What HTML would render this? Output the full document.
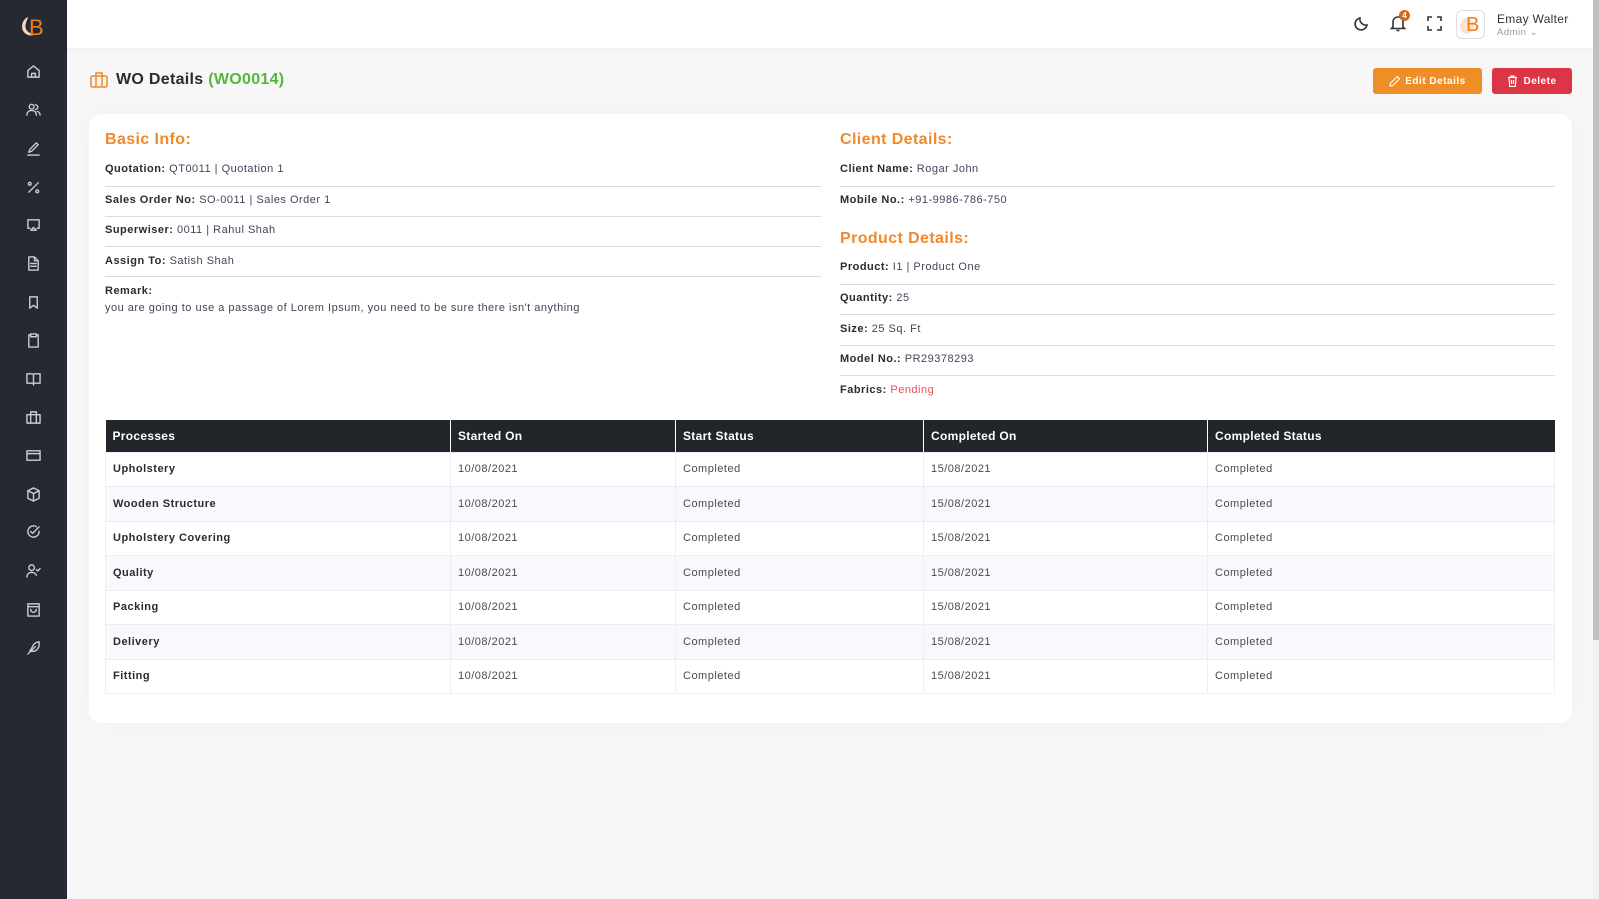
<!DOCTYPE html>
<html><head><meta charset="utf-8"><style>
*{box-sizing:border-box;margin:0;padding:0}
body{width:1599px;height:899px;overflow:hidden;background:#f7f7f7;font-family:"Liberation Sans",sans-serif;color:#222;position:relative}
.side{position:absolute;left:0;top:0;width:67px;height:899px;background:#262932}
.side svg.ic{position:absolute;left:26px;width:15px;height:15px;fill:none;stroke:#c9ccd3;stroke-width:1.5;stroke-linecap:round;stroke-linejoin:round}
.top{position:absolute;left:67px;top:0;width:1526px;height:48px;background:#fff;box-shadow:0 2px 8px rgba(0,0,0,.04)}
.scroll{position:absolute;right:0;top:0;width:6px;height:640px;background:#c1c1c1}
.scrolltrack{position:absolute;right:0;top:0;width:6px;height:899px;background:#f1f1f1}
.title{position:absolute;left:116px;top:71px;font-size:16px;font-weight:bold;color:#2b2b2b;letter-spacing:.3px}
.title span{color:#52b73c}
.btn{position:absolute;top:68px;height:26px;border-radius:3px;color:#fff;font-size:10px;font-weight:bold;display:flex;align-items:center;justify-content:center;gap:5px;letter-spacing:.5px}
.card{position:absolute;left:89px;top:114px;width:1483px;height:609px;background:#fff;border-radius:12px;box-shadow:0 0 20px rgba(0,0,0,.03)}
.h{position:absolute;font-size:16px;font-weight:bold;color:#f0892a;letter-spacing:.4px}
.row{position:absolute;font-size:11px;color:#4b3f5a;letter-spacing:.5px}
.row b{color:#2b2b2b}
.ln{position:absolute;height:1px;background:#dcdcdc}
table{position:absolute;left:105px;top:420px;width:1450px;border-collapse:collapse;font-size:11px}
th{background:#22252a;color:#fff;text-align:left;height:32px;padding:0 7px;font-size:12px;border-right:1px solid #fff;letter-spacing:.3px}
th:last-child{border-right:none}
td{height:34.5px;padding:0 7px;color:#4b4b4b;border:1px solid #ecedf5;letter-spacing:.5px}
td:first-child{font-weight:bold;color:#2b2b2b}
tr:nth-child(odd) td{background:#f8f9fc}
</style></head><body>
<div class="side">
<svg style="position:absolute;left:19px;top:12px" width="30" height="28" viewBox="0 0 30 28"><path d="M9 5 C2 8 1 18 7 22 C10 24 14 24 16 22 C9 22 5 17 7 11 C8 8 9 6 9 5Z" fill="#f5d6c0"/><text x="10" y="23" font-family="Liberation Sans" font-size="22" fill="#f07d17">B</text></svg>
<svg class="ic" style="top:64px" viewBox="0 0 16 16"><path d="M2 7L8 2l6 5v7H2z M6 14v-4h4v4"/></svg>
<svg class="ic" style="top:102px" viewBox="0 0 16 16"><circle cx="6" cy="5" r="2.5"/><path d="M1 14c0-3 2-5 5-5s5 2 5 5M10 3a2.5 2.5 0 010 5M12 10c2 .5 3 2 3 4"/></svg>
<svg class="ic" style="top:141px" viewBox="0 0 16 16"><path d="M3 12l1-3 7-7 2 2-7 7-3 1zM2 15h12"/></svg>
<svg class="ic" style="top:180px" viewBox="0 0 16 16"><path d="M3 13L13 3"/><circle cx="4" cy="4" r="1.5"/><circle cx="12" cy="12" r="1.5"/></svg>
<svg class="ic" style="top:217px" viewBox="0 0 16 16"><path d="M4 12H2V3h12v9h-2M5 14l3-3 3 3z"/></svg>
<svg class="ic" style="top:256px" viewBox="0 0 16 16"><path d="M3 1h6l4 4v10H3zM9 1v4h4M5 8h6M5 11h6"/></svg>
<svg class="ic" style="top:295px" viewBox="0 0 16 16"><path d="M4 2h8v12l-4-3-4 3z"/></svg>
<svg class="ic" style="top:333px" viewBox="0 0 16 16"><path d="M5 2H3v13h10V2h-2M5 1h6v3H5z"/></svg>
<svg class="ic" style="top:371px" viewBox="0 0 16 16"><path d="M1 3h6l1 1 1-1h6v10H1zM8 4v11"/></svg>
<svg class="ic" style="top:410px" viewBox="0 0 16 16"><path d="M1 5h14v9H1zM5 5V2h6v3M5 5v9M11 5v9"/></svg>
<svg class="ic" style="top:448px" viewBox="0 0 16 16"><path d="M1 3h14v10H1zM1 6h14"/></svg>
<svg class="ic" style="top:487px" viewBox="0 0 16 16"><path d="M8 1l6 3v8l-6 3-6-3V4zM2 4l6 3 6-3M8 7v8"/></svg>
<svg class="ic" style="top:524px" viewBox="0 0 16 16"><path d="M14 8a6 6 0 11-3-5.2M5 8l2 2 7-7"/></svg>
<svg class="ic" style="top:563px" viewBox="0 0 16 16"><circle cx="6" cy="5" r="3"/><path d="M1 15c0-3 2-5 5-5s4 1 5 3M11 7l1.5 1.5L15 6"/></svg>
<svg class="ic" style="top:602px" viewBox="0 0 16 16"><path d="M2 2h12v13H2zM2 5h12M5 8a3 3 0 006 0"/></svg>
<svg class="ic" style="top:640px" viewBox="0 0 16 16"><path d="M2 15L10 7M4 12h5c3-1 5-4 5-7V2c-3 0-6 2-7 5z"/></svg>
</div>
<div class="top">
<svg style="position:absolute;left:1287px;top:15px" width="16" height="16" viewBox="0 0 16 16" fill="none" stroke="#333" stroke-width="1.6"><path d="M13 10A6 6 0 016 3a6 6 0 107 7z"/></svg>
<svg style="position:absolute;left:1322px;top:14px" width="18" height="18" viewBox="0 0 18 18" fill="none" stroke="#333" stroke-width="1.6"><path d="M4 13V8a5 5 0 0110 0v5l1.5 1.5h-13zM7.5 16.5h3"/></svg>
<div style="position:absolute;left:1332px;top:10px;width:11px;height:11px;border-radius:50%;background:#d2691e;color:#fff;font-size:8px;font-weight:bold;text-align:center;line-height:11px">4</div>
<svg style="position:absolute;left:1360px;top:16px" width="15" height="15" viewBox="0 0 15 15" fill="none" stroke="#333" stroke-width="1.6"><path d="M1 5V1h4M10 1h4v4M14 10v4h-4M5 14H1v-4"/></svg>
<div style="position:absolute;left:1389px;top:10px;width:29px;height:29px;border:1px solid #ddd;border-radius:6px;background:#fff;overflow:hidden"><div style="position:absolute;left:3px;top:7px;width:14px;height:16px;border-radius:50%;background:#fbe3d3"></div><div style="position:absolute;left:9px;top:3px;font-size:20px;color:#f07d17">B</div></div>
<div style="position:absolute;left:1430px;top:12px;font-size:12px;color:#333;letter-spacing:.3px">Emay Walter</div>
<div style="position:absolute;left:1430px;top:27px;font-size:9.5px;color:#999;letter-spacing:.5px">Admin ⌄</div>
</div>
<div class="scrolltrack"></div><div class="scroll"></div>
<svg style="position:absolute;left:90px;top:72px" width="18" height="16" viewBox="0 0 18 16" fill="none" stroke="#f0892a" stroke-width="1.5"><rect x="1" y="4" width="16" height="11" rx="1.5"/><path d="M6 4V1h6v3M6 4v11M12 4v11"/></svg>
<div class="title">WO Details <span>(WO0014)</span></div>
<div class="btn" style="left:1373px;width:109px;background:#ef8e26"><svg width="11" height="11" viewBox="0 0 12 12" fill="none" stroke="#fff" stroke-width="1.2"><path d="M1 11l.5-3L9 .5l2.5 2.5L4 10.5z"/></svg>Edit Details</div>
<div class="btn" style="left:1492px;width:80px;background:#dc3545"><svg width="11" height="12" viewBox="0 0 11 12" fill="none" stroke="#fff" stroke-width="1.2"><path d="M1 2.5h9M4 2.5V1h3v1.5M2 2.5l.7 9h5.6l.7-9M4.5 5v4M6.5 5v4"/></svg>Delete</div>
<div class="card"></div>
<div class="h" style="left:105px;top:131px">Basic Info:</div>
<div class="row" style="left:105px;top:163px"><b>Quotation:</b> QT0011 | Quotation 1</div>
<div class="ln" style="left:105px;top:186px;width:716px"></div>
<div class="row" style="left:105px;top:194px"><b>Sales Order No:</b> SO-0011 | Sales Order 1</div>
<div class="ln" style="left:105px;top:216px;width:716px"></div>
<div class="row" style="left:105px;top:224px"><b>Superwiser:</b> 0011 | Rahul Shah</div>
<div class="ln" style="left:105px;top:246px;width:716px"></div>
<div class="row" style="left:105px;top:255px"><b>Assign To:</b> Satish Shah</div>
<div class="ln" style="left:105px;top:276px;width:716px"></div>
<div class="row" style="left:105px;top:285px"><b>Remark:</b></div>
<div class="row" style="left:105px;top:302px">you are going to use a passage of Lorem Ipsum, you need to be sure there isn't anything</div>
<div class="h" style="left:840px;top:131px">Client Details:</div>
<div class="row" style="left:840px;top:163px"><b>Client Name:</b> Rogar John</div>
<div class="ln" style="left:840px;top:186px;width:715px"></div>
<div class="row" style="left:840px;top:194px"><b>Mobile No.:</b> +91-9986-786-750</div>
<div class="h" style="left:840px;top:230px">Product Details:</div>
<div class="row" style="left:840px;top:261px"><b>Product:</b> I1 | Product One</div>
<div class="ln" style="left:840px;top:284px;width:715px"></div>
<div class="row" style="left:840px;top:292px"><b>Quantity:</b> 25</div>
<div class="ln" style="left:840px;top:314px;width:715px"></div>
<div class="row" style="left:840px;top:323px"><b>Size:</b> 25 Sq. Ft</div>
<div class="ln" style="left:840px;top:345px;width:715px"></div>
<div class="row" style="left:840px;top:353px"><b>Model No.:</b> PR29378293</div>
<div class="ln" style="left:840px;top:375px;width:715px"></div>
<div class="row" style="left:840px;top:384px"><b>Fabrics:</b> <span style="color:#e8505b">Pending</span></div>
<table>
<tr><th style="width:345px">Processes</th><th style="width:225px">Started On</th><th style="width:248px">Start Status</th><th style="width:284px">Completed On</th><th>Completed Status</th></tr>
<tr><td>Upholstery</td><td>10/08/2021</td><td>Completed</td><td>15/08/2021</td><td>Completed</td></tr>
<tr><td>Wooden Structure</td><td>10/08/2021</td><td>Completed</td><td>15/08/2021</td><td>Completed</td></tr>
<tr><td>Upholstery Covering</td><td>10/08/2021</td><td>Completed</td><td>15/08/2021</td><td>Completed</td></tr>
<tr><td>Quality</td><td>10/08/2021</td><td>Completed</td><td>15/08/2021</td><td>Completed</td></tr>
<tr><td>Packing</td><td>10/08/2021</td><td>Completed</td><td>15/08/2021</td><td>Completed</td></tr>
<tr><td>Delivery</td><td>10/08/2021</td><td>Completed</td><td>15/08/2021</td><td>Completed</td></tr>
<tr><td>Fitting</td><td>10/08/2021</td><td>Completed</td><td>15/08/2021</td><td>Completed</td></tr>
</table>
</body></html>
